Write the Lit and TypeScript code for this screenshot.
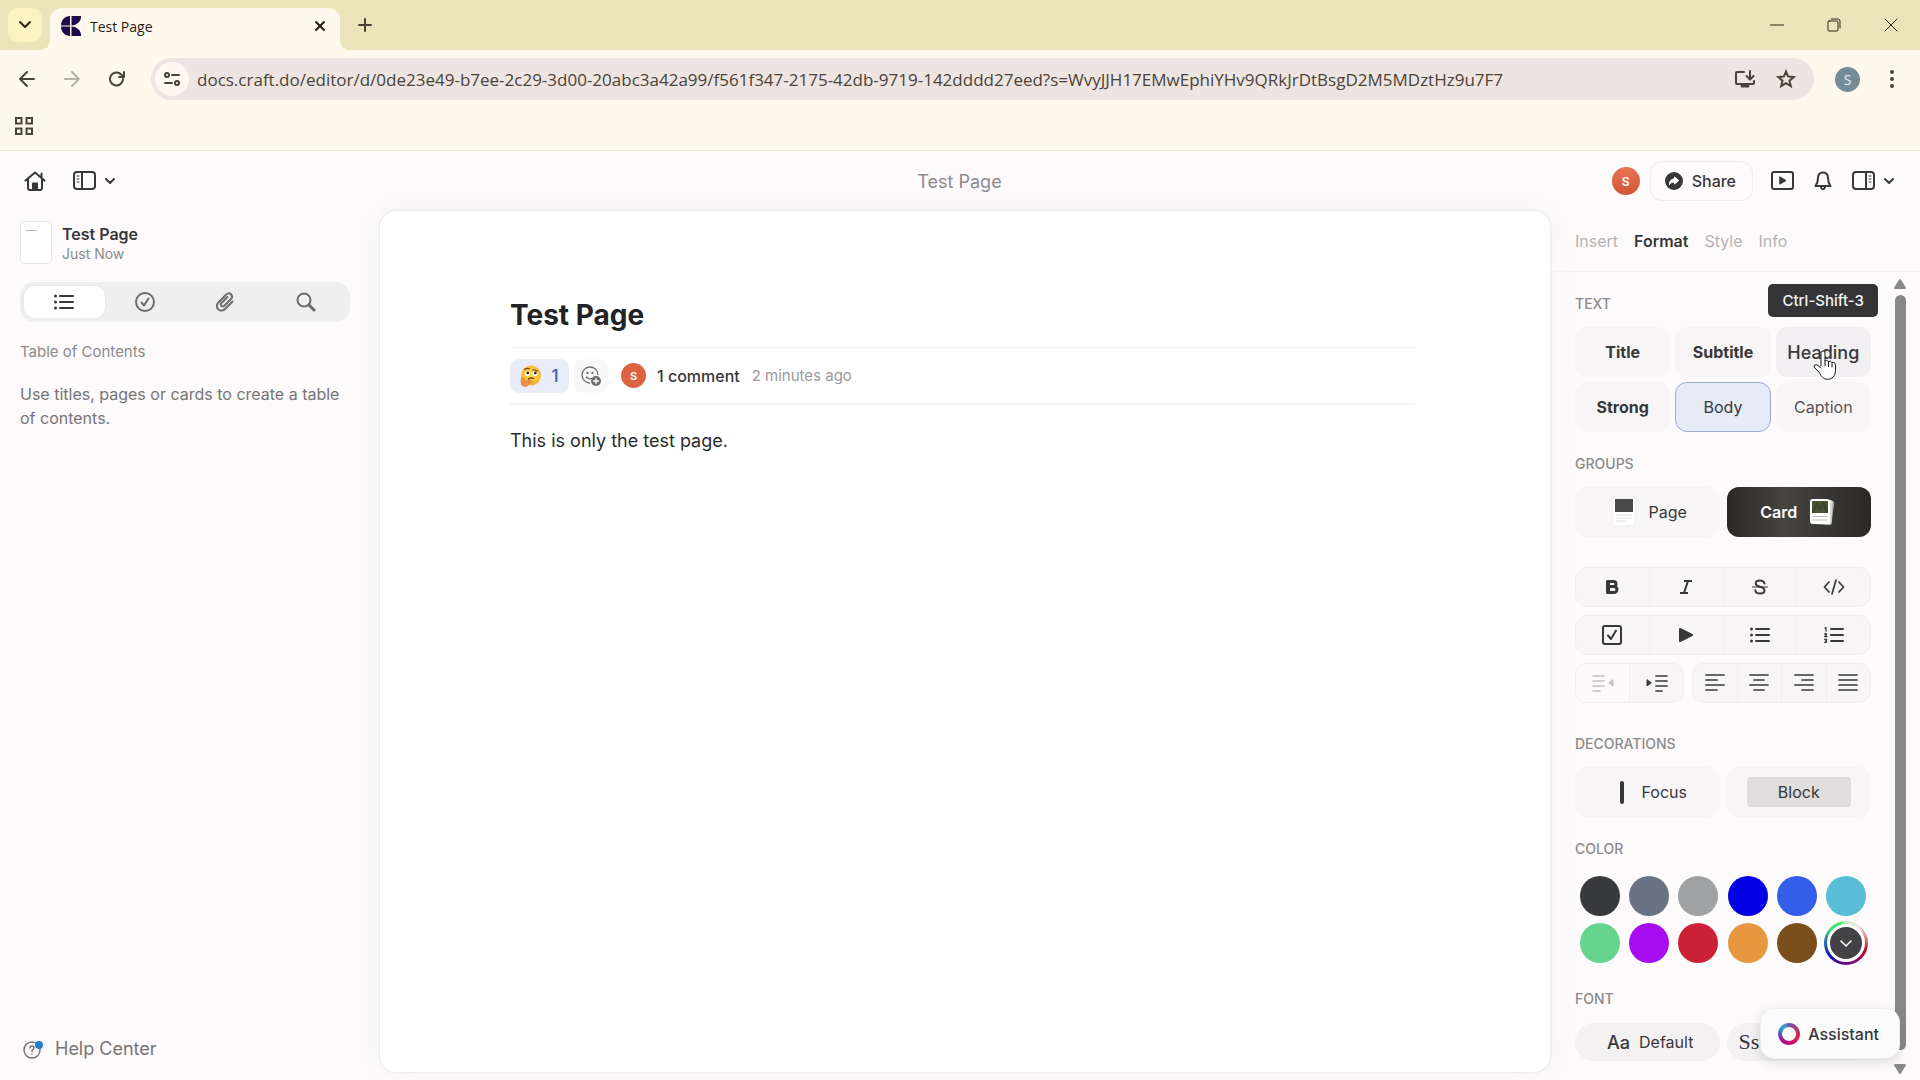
import { LitElement, html, css, svg, type TemplateResult } from "lit";
import { customElement, state } from "lit/decorators.js";
import { classMap } from "lit/directives/class-map.js";
import { styleMap } from "lit/directives/style-map.js";

const icon = (w: number, h: number, body: unknown, stroke = 2): TemplateResult => html`<svg
  width=${w} height=${h} viewBox="0 0 ${w} ${h}" fill="none" stroke="currentColor"
  stroke-width=${stroke} stroke-linecap="round" stroke-linejoin="round" aria-hidden="true">${body}</svg>`;

const chevron = icon(12, 12, svg`<path d="M2 4l4 4 4-4"/>`);
const chevronTab = icon(12, 12, svg`<path d="M1 3l5 5 5-5"/>`, 2);
const favicon = icon(22, 22, svg`<g fill="#1c0c4b" stroke="none">
  <path d="M10 1v9.500H1C1 5 5 1 10 1z"/><path d="M10 21v-9.500H1C1 17 5 21 10 21z"/>
  <path d="M11.500 1H21v1c0 4-4 8.500-9.500 8.500z"/><path d="M11.500 21H21v-1c0-4-4-8.500-9.500-8.500z"/></g>`);
const closeSmall = icon(12, 12, svg`<path d="M2 2l8 8M10 2l-8 8"/>`);
const plus = icon(14, 14, svg`<path d="M7 1v12M1 7h12"/>`);
const minimise = icon(14, 14, svg`<path d="M0 7h14"/>`, 1);
const restore = icon(14, 14, svg`<rect x="1" y="3" width="10" height="10" rx="1"/><path d="M4 1h7q2 0 2 2v7"/>`, 1);
const closeWin = icon(14, 14, svg`<path d="M1 1l12 12M13 1L1 13"/>`, 1);
const back = icon(18, 18, svg`<path d="M16 9H2M9 2L2 9l7 7"/>`);
const forward = icon(18, 18, svg`<path d="M2 9h14M9 2l7 7-7 7"/>`);
const reload = icon(18, 18, svg`<path d="M15 9a6.500 6.500 0 1 1-2-4.700L15.500 7M16 2v5h-5"/>`);
const tune = icon(18, 18, svg`<circle cx="4" cy="5" r="2"/><path d="M9 5h7M2 13h7"/><circle cx="14" cy="13" r="2"/>`);
const install = icon(22, 20, svg`<path d="M10 3H3q-1 0-1 1v10q0 1 1 1h16q1 0 1-1v-2M16 2v8M12.500 7l3.500 3.500L19.500 7"/><path d="M8 17h6" stroke-width="3"/>`);
const star = icon(20, 20, svg`<path stroke-linejoin="miter" d="M10 2.500l2.200 5.100 5.500.500-4.200 3.600 1.300 5.400L10 14.200l-4.800 2.900 1.300-5.400-4.200-3.600 5.500-.500z"/>`);
const dots = icon(4, 18, svg`<g fill="currentColor" stroke="none"><circle cx="2" cy="2" r="2"/><circle cx="2" cy="9" r="2"/><circle cx="2" cy="16" r="2"/></g>`);
const apps = icon(18, 18, svg`<g stroke-linejoin="miter"><rect x="1" y="1" width="5.500" height="5.500"/><rect x="11.500" y="1" width="5.500" height="5.500"/><rect x="1" y="11.500" width="5.500" height="5.500"/><rect x="11.500" y="11.500" width="5.500" height="5.500"/></g>`);
const home = icon(22, 20, svg`<path d="M1.500 9.500L11 1.500l9.500 8M4 8v9q0 2 2 2h10q2 0 2-2V8M17.500 2.500V6"/><path d="M9 18.500v-6h4v6z" fill="currentColor"/>`);
const panelLeft = icon(24, 20, svg`<rect x="1" y="1" width="21" height="17" rx="3"/><path d="M9 1v17"/><path d="M4 5h2M4 8h2M4 11h2" stroke-width="1"/>`);
const panelRight = icon(24, 20, svg`<rect x="1" y="1" width="21" height="17" rx="3"/><path d="M14 1v17"/><path d="M17 5h2M17 8h2M17 11h2" stroke-width="1"/>`);
const present = icon(24, 20, svg`<rect x="1" y="1" width="21" height="17" rx="2"/><path d="M9 6l6 3.500L9 13z" fill="currentColor" stroke-width="1"/>`);
const bell = icon(18, 20, svg`<path d="M9 1.500c-3.600 0-5 2.500-5 5.500 0 4-1 6-2.500 8h15C15 13 14 11 14 7c0-3-1.400-5.500-5-5.500z"/><path d="M7 16.500q2 3.500 4 0"/>`);
const shareIcon = icon(18, 18, svg`<circle cx="9" cy="9" r="9" fill="currentColor" stroke="none"/><path d="M4.500 12.500c0-4 2-5.500 5-5.500V5l4.300 3.500L9.500 12v-2c-2.500 0-4 .700-5 2.500z" fill="#fff" stroke="#fff" stroke-width="1"/>`);
const listIcon = icon(20, 16, svg`<path d="M6 2h13M6 8h13M6 14h13"/><g fill="currentColor" stroke="none"><circle cx="1.500" cy="2" r="1.500"/><circle cx="1.500" cy="8" r="1.500"/><circle cx="1.500" cy="14" r="1.500"/></g>`);
const numberedIcon = icon(20, 16, svg`<path d="M7 2h12M7 8h12M7 14h12"/><path stroke-width="1.300" d="M1 1l1-.500V4M.700 7q1.800-1.200 1.800.500L.700 9.700h2.200M.700 12.300h2L1.700 13.700q1.500.300.600 1.500-.800.500-1.600 0"/>`);
const checkCircle = icon(20, 20, svg`<circle cx="10" cy="10" r="9"/><path d="M6.500 10.500l2.500 3 4.500-7"/>`);
const clip = icon(20, 20, svg`<path d="M17.500 9.500l-7.500 7.500a4.500 4.500 0 0 1-7-6L11 2.800a3.200 3.200 0 0 1 5.500 3.700L9 14a2 2 0 0 1-3-2.500l6.500-6.500"/>`);
const search = icon(20, 20, svg`<circle cx="8" cy="8" r="6.500"/><path d="M13 13l5 5" stroke-width="3"/>`);
const help = icon(20, 20, svg`<circle cx="9" cy="11" r="8"/><path d="M7 9q0-2 2-2t2 2q0 1-2 2.500v1M9 15v.200"/><circle cx="16" cy="6" r="4" fill="#2180cf" stroke="none"/>`, 1.5);
const thinking = icon(22, 22, svg`<defs><radialGradient id="face" cx=".5" cy=".4" r=".6"><stop offset="0" stop-color="#ffe04d"/><stop offset="1" stop-color="#f6ac2b"/></radialGradient></defs>
  <circle cx="11" cy="10.500" r="10" fill="url(#face)" stroke="none"/>
  <circle cx="7.500" cy="8.500" r="2.600" fill="#fff" stroke="none"/><circle cx="15" cy="8.500" r="2.600" fill="#fff" stroke="none"/>
  <circle cx="7.800" cy="8" r="1.400" fill="#3b2410" stroke="none"/><circle cx="15.300" cy="8" r="1.400" fill="#3b2410" stroke="none"/>
  <path d="M4.500 4.500q2.500-2 5-.700M12.500 5q3-.600 5 1.200" stroke="#7b4314" stroke-width="1.200"/>
  <path d="M8.500 14q2.500-2 5-.500" stroke="#6b3510" stroke-width="1.400"/>
  <path d="M1.500 13q1.500-1 2.500 1l1.500 2.500q4-1.500 6.500-.500 1 .800-.500 1.500l-3 .800q.500 3-3.500 3.200Q1 21 1 17z" fill="#ef8d4b" stroke="#d96c38" stroke-width=".500"/>`);
const addReaction = icon(20, 20, svg`<path d="M17 8.500A8 8 0 1 0 8.500 17"/><path d="M5.500 11q2 2.500 5 1.500"/><circle cx="6.500" cy="7" r=".500"/><circle cx="11.500" cy="7" r=".500"/><circle cx="15" cy="15" r="5" fill="currentColor" stroke="none"/><path d="M15 12.500v5M12.500 15h5" stroke="#fff"/>`, 1.3);
const boldIcon = icon(16, 16, svg`<path d="M4 2.500h5.500a2.500 2.500 0 0 1 0 5H4zM4 7.500h6a3 3 0 0 1 0 6H4z" stroke-width="3" stroke-linejoin="miter"/><path d="M4 2v12" stroke-width="4" stroke-linecap="butt"/>`);
const italicIcon = icon(16, 16, svg`<path d="M6 2h8M2 14h8M10 2L6 14" stroke-linecap="butt"/>`);
const strikeIcon = icon(16, 16, svg`<path d="M12.500 4.500C12 2.500 10.500 1.500 8 1.500c-2.700 0-4.300 1.400-4.300 3.200C3.700 8.500 12.500 7 12.500 11.200c0 2-1.900 3.300-4.500 3.300-2.700 0-4.400-1.200-4.700-3.200"/><path d="M0 8h16" stroke-width="1"/>`);
const codeIcon = icon(22, 16, svg`<path d="M6 3L1.500 8 6 13M16 3l4.500 5-4.500 5M13 1L9 15"/>`, 1.7);
const todoIcon = icon(20, 20, svg`<rect x="1" y="1" width="18" height="18" rx="2"/><path d="M6 10.500l3 3.500 5-8.500"/>`);
const toggleIcon = icon(16, 16, svg`<path d="M2 2l12 6-12 6z" fill="currentColor"/>`);
const outdent = icon(22, 18, svg`<path d="M1 2h11M1 7h11M1 12h11M1 17h7"/><path d="M21 6v6l-4-3z" fill="currentColor" stroke-width="1"/>`, 1.5);
const indent = icon(22, 18, svg`<path d="M10 2h11M10 7h11M10 12h11M10 17h6"/><path d="M1 6v6l4-3z" fill="currentColor" stroke-width="1"/>`, 1.7);
const alignIcon = (lines: string) => icon(20, 18, svg`<path d=${lines}/>`, 1.7);
const cursor = icon(26, 32, svg`<path d="M9 17V4a2 2 0 0 1 4 0v8q1-1.500 3.500.500 2-1 3.200.800 3.300-.500 3.800 2v6c0 5-3 9-8 9-4 0-6-2.500-8-6.500L2 18q0-3 3-2.200L9 19" fill="#fff" stroke="#1a1a1a"/><path d="M13 12v5M16.500 13v4.500M20 14v4" stroke="#1a1a1a"/>`, 1);
const pageIcon = icon(24, 30, svg`<rect x="1" y="1" width="22" height="28" rx="2" fill="#fff" stroke="#f0eff0" stroke-width="1"/><path d="M3 2h18v13H3z" fill="#4a4a4a" stroke="none"/><path d="M4 18h16M4 21h16M4 24h9" stroke="#ddd" stroke-width="1"/>`);
const cardIcon = icon(28, 28, svg`<rect x="6" y="2" width="18" height="24" rx="2" fill="#a7a79e" stroke="none" transform="rotate(7 15 14)"/><rect x="4" y="1.500" width="19" height="25" rx="2" fill="#d9d9d4" stroke="none" transform="rotate(3 14 14)"/><rect x="1" y="1" width="20" height="25" rx="3" fill="#fff" stroke="none"/><path d="M3 3h16v12H3z" fill="#4b5432" stroke="none"/><path d="M4 14l4-8 3 5 3-6 4 8" stroke="#3c4529" stroke-width="2"/><path d="M4 18.500h14M4 22h14" stroke="#bbb" stroke-width="1"/>`);
const arrow = (d: string) => icon(14, 12, svg`<path d=${d} fill="currentColor"/>`);

interface Tool { name: string; glyph: TemplateResult; off?: boolean }

const MARKS: Tool[] = [
  { name: "Bold", glyph: boldIcon }, { name: "Italic", glyph: italicIcon },
  { name: "Strikethrough", glyph: strikeIcon }, { name: "Code", glyph: codeIcon },
];
const LISTS: Tool[] = [
  { name: "To-do", glyph: todoIcon }, { name: "Toggle", glyph: toggleIcon },
  { name: "Bulleted list", glyph: listIcon }, { name: "Numbered list", glyph: numberedIcon },
];
const INDENTS: Tool[] = [
  { name: "Outdent", glyph: outdent, off: true }, { name: "Indent", glyph: indent },
];
const ALIGNS: Tool[] = [
  { name: "Align left", glyph: alignIcon("M1 1h18M1 6h11M1 11h18M1 16h11") },
  { name: "Align centre", glyph: alignIcon("M1 1h18M5 6h10M1 11h18M5 16h10") },
  { name: "Align right", glyph: alignIcon("M1 1h18M8 6h11M1 11h18M8 16h11") },
  { name: "Justify", glyph: alignIcon("M1 1h18M1 6h18M1 11h18M1 16h18") },
];
const COLORS = ["#38393a", "#697382", "#a0a1a3", "#0600e6", "#335eea", "#5abdd8",
  "#66d48f", "#a80cf0", "#cb2038", "#e8963f", "#79501b"];

const base = css`
  * { box-sizing: border-box; }
  button, input { font: inherit; color: inherit; border: 0; background: none; padding: 0; margin: 0; }
  button { display: flex; align-items: center; justify-content: center; }
  svg { display: block; flex: none; }
  h1, h2, p { margin: 0; }
`;

@customElement("browser-chrome")
export class BrowserChrome extends LitElement {
  static styles = [base, css`
    :host { display: block; background: #fff8ec; border-bottom: 1px solid #ebe5d3; color: #4a4338;
      font-family: "Open Sans", "Noto Sans", sans-serif; }
    .strip { display: flex; align-items: flex-end; height: 50px; padding: 0 22px 0 8px; background: #ebe4ba; }
    .menu { width: 34px; height: 34px; border-radius: 10px; background: #fcf3c2; align-self: center; color: #2b2718; }
    .tab { position: relative; display: flex; align-items: center; width: 290px; height: 42px; margin-left: 8px; padding: 0 14px 6px 10px;
      border-radius: 12px 12px 0 0; background: #fff8ec; color: #1f1d18; font-size: 14px; }
    .tab::before, .tab::after { content: ""; position: absolute; bottom: 0; width: 10px; height: 10px; }
    .tab::before { left: -10px; background: radial-gradient(circle at 0 0, #ebe4ba 10px, #fff8ec 10px); }
    .tab::after { right: -10px; background: radial-gradient(circle at 100% 0, #ebe4ba 10px, #fff8ec 10px); }
    .tab span { flex: 1; margin-left: 8px; }
    .new { width: 34px; height: 34px; margin-left: 8px; align-self: center; }
    .win { display: flex; gap: 43px; margin-left: auto; align-self: center; color: #2b2718; }
    .bar { display: flex; align-items: center; height: 58px; padding: 0 26px 0 18px; gap: 27px; }
    .off { color: #b8b2a6; }
    .omni { display: flex; flex: 1; align-items: center; height: 42px; margin: 0 -6px 0 -2px; padding: 0 18px 0 4px;
      border-radius: 21px; background: #eee5e2; gap: 20px; }
    .site { width: 34px; height: 34px; border-radius: 17px; background: #fff8f0; }
    .omni input { flex: 1; min-width: 0; height: 34px; margin-left: -12px; font-size: 17px; outline: 0; }
    .user { width: 25px; height: 25px; margin-right: 3px; border-radius: 13px; background: #748c98; color: #e6f0f5; font-size: 14px; }
    .marks { display: flex; align-items: center; height: 42px; padding: 0 15px 6px; }
  `];

  render() {
    return html`
      <div class="strip">
        <button class="menu" aria-label="Search tabs">${chevronTab}</button>
        <div class="tab">${favicon}<span>Test Page</span><button aria-label="Close tab">${closeSmall}</button></div>
        <button class="new" aria-label="New tab">${plus}</button>
        <div class="win">
          <button aria-label="Minimise">${minimise}</button>
          <button aria-label="Restore">${restore}</button>
          <button aria-label="Close">${closeWin}</button>
        </div>
      </div>
      <div class="bar">
        <button aria-label="Back">${back}</button>
        <button class="off" aria-label="Forward" disabled>${forward}</button>
        <button aria-label="Reload">${reload}</button>
        <div class="omni">
          <button class="site" aria-label="Site information">${tune}</button>
          <input aria-label="Address" value="docs.craft.do/editor/d/0de23e49-b7ee-2c29-3d00-20abc3a42a99/f561f347-2175-42db-9719-142dddd27eed?s=WvyJJH17EMwEphiYHv9QRkJrDtBsgD2M5MDztHz9u7F7">
          <button aria-label="Install app">${install}</button>
          <button aria-label="Bookmark">${star}</button>
        </div>
        <button class="user" aria-label="Profile">S</button>
        <button aria-label="Browser menu">${dots}</button>
      </div>
      <div class="marks"><button aria-label="Apps">${apps}</button></div>`;
  }
}

@customElement("doc-sidebar")
export class DocSidebar extends LitElement {
  static styles = [base, css`
    :host { display: flex; flex-direction: column; padding: 10px 30px 18px 20px; }
    .doc { display: flex; align-items: center; gap: 10px; }
    .thumb { width: 32px; height: 43px; padding: 8px 0 0 5px; border: 1px solid #e6e4e5; border-radius: 5px; background: #fff; }
    .thumb i { display: block; width: 11px; height: 1px; background: #bbb; }
    .name { font-size: 16px; line-height: 22px; font-weight: 600; color: #38373a; }
    .when { font-size: 14px; line-height: 18px; color: #8c8a8c; }
    .seg { display: grid; grid-template-columns: repeat(4, 1fr); height: 40px; margin-top: 18px; padding: 4px;
      border-radius: 14px; background: #f0eff0; color: #6b6a6c; }
    .seg button { border-radius: 11px; }
    .seg .on { background: #fff; color: #38373a; box-shadow: 0 0 3px #0001; }
    h2 { margin-top: 20px; font-size: 15px; line-height: 20px; font-weight: 400; color: #8c8a8c; }
    p { margin-top: 20px; font-size: 16px; line-height: 24px; color: #767476; }
    a { display: flex; align-items: center; gap: 12px; margin-top: auto; padding-left: 3px; font-size: 18px;
      line-height: 26px; color: #767476; text-decoration: none; }
  `];

  @state() private view = 0;

  render() {
    const views = [["Contents", listIcon], ["Tasks", checkCircle], ["Attachments", clip], ["Search", search]] as const;
    return html`
      <div class="doc">
        <div class="thumb"><i></i></div>
        <div><div class="name">Test Page</div><div class="when">Just Now</div></div>
      </div>
      <div class="seg">
        ${views.map(([name, glyph], i) => html`<button aria-label=${name} class=${classMap({ on: this.view === i })}
          @click=${() => (this.view = i)}>${glyph}</button>`)}
      </div>
      <h2>Table of Contents</h2>
      <p>Use titles, pages or cards to create a table of contents.</p>
      <a href="#help">${help}Help Center</a>`;
  }
}

@customElement("doc-page")
export class DocPage extends LitElement {
  static styles = [base, css`
    :host { display: block; padding: 80px 135px 0 130px; margin-bottom: 8px; border-radius: 16px; background: #fff;
      box-shadow: 0 0 3px #0002, 0 0 36px #00000008; color: #232225; }
    h1 { font-size: 28px; line-height: 48px; font-weight: 700; }
    .meta { display: flex; align-items: center; height: 58px; margin-top: 8px; border-top: 1px solid #f4f3f4;
      border-bottom: 2px solid #f4f3f4; }
    .chip { gap: 9px; width: 59px; height: 34px; border-radius: 9px; background: #e9edf9; color: #3a5fb0; font-size: 17px; font-weight: 500; }
    .add { width: 34px; height: 34px; margin-left: 5px; border-radius: 9px; background: #f9f8f9; color: #6b6a6c; }
    .face { display: grid; place-items: center; width: 25px; height: 25px; margin: 0 11px 0 13px; border-radius: 13px;
      background: #dc6342; color: #fff; font-size: 11px; font-weight: 600; }
    .count { font-size: 16px; font-weight: 500; color: #38373a; }
    .ago { margin-left: 12px; font-size: 15px; color: #9a999b; }
    .text { margin-top: 21px; font-size: 18px; line-height: 30px; color: #2c2b2e; }
  `];

  render() {
    return html`
      <h1>Test Page</h1>
      <div class="meta">
        <button class="chip" aria-label="Thinking face, 1 reaction">${thinking}<span>1</span></button>
        <button class="add" aria-label="Add reaction">${addReaction}</button>
        <span class="face">S</span>
        <button class="count">1 comment</button>
        <span class="ago">2 minutes ago</span>
      </div>
      <p class="text">This is only the test page.</p>`;
  }
}

@customElement("format-panel")
export class FormatPanel extends LitElement {
  static styles = [base, css`
    :host { display: flex; flex-direction: column; min-width: 0; color: #38373a; font-size: 16px; }
    .tabs { display: flex; gap: 16px; height: 61px; padding-left: 25px; border-bottom: 1px solid #f4f2f3; }
    .tabs button { color: #b5b3b5; font-size: 16px; }
    .tabs .on { color: #38373a; font-weight: 600; }
    .scroll { display: flex; flex: 1; min-height: 0; }
    .body { flex: 1; padding: 22px 19px 0 25px; }
    h2 { font-size: 14px; line-height: 20px; font-weight: 500; color: #8c8a8c; }
    .styles { display: grid; grid-template-columns: repeat(3, 1fr); gap: 5px; margin-top: 13px; }
    .pair { display: grid; grid-template-columns: repeat(2, 1fr); gap: 7px; margin-top: 13px; }
    .styles button, .pair button { height: 50px; border-radius: 12px; background: #f7f5f6; }
    .strong { font-weight: 700; }
    .styles .heading { position: relative; background: #f1eff1; font-size: 18px; font-weight: 500; }
    .tip { position: absolute; bottom: 60px; right: -7px; height: 33px; padding: 0 14px; border-radius: 5px; background: #353437;
      color: #f5f5f5; font-size: 15px; line-height: 33px; font-weight: 500; white-space: nowrap; }
    .hand { position: absolute; left: 36px; top: 22px; }
    .styles .body-style { border: 1px solid #9aa9cc; background: #e5ebf7; }
    .caption { color: #555356; }
    .gap { margin-top: 22px; }
    .pair .page { gap: 13px; padding-left: 4px; }
    .pair .card { gap: 12px; background: linear-gradient(90deg, #2b2926, #46443f 40%, #2b2926); color: #fff; font-weight: 600; }
    .rows { display: flex; flex-direction: column; gap: 8px; margin-top: 30px; }
    .split { display: grid; grid-template-columns: 109fr 179fr; gap: 8px; }
    .row { display: flex; height: 40px; border: 1px solid #f0eeef; border-radius: 12px; background: #f7f5f6; overflow: hidden; }
    .row button { flex: 1; border-left: 1px solid #f0eeef; }
    .row button:first-child { border-left: 0; }
    .row .off { color: #c2c0c2; background: #fbf9fa; }
    .deco { margin-top: 31px; }
    .pair .focus { gap: 18px; padding-left: 12px; }
    .focus i { width: 4px; height: 23px; border-radius: 2px; background: #38373a; }
    .block span { padding: 0 31px; border-radius: 4px; background: #dfddde; line-height: 30px; }
    .pair.fonts { margin-top: 14px; }
    .pair.fonts button { height: 38px; padding-left: 6px; border-radius: 19px; background: #f3f1f2; gap: 9px; }
    .aa { font-size: 18px; font-weight: 500; }
    .pair.fonts .serif { justify-content: flex-start; padding-left: 12px; font-family: "Liberation Serif", serif; font-size: 22px; }
    .colors { display: grid; grid-template-columns: repeat(6, 40px); justify-content: space-between; gap: 7px 0; padding: 0 5px; margin-top: 17px; }
    .colors button { height: 40px; border-radius: 20px; }
    .colors .more { width: 44px; height: 44px; margin: -2px; border-radius: 22px;
      background: conic-gradient(#c9f5c4, #f1e6e2 40deg, #d9707c 80deg, #b50d2b 110deg, #8a0a60 150deg, #5c0a90 190deg, #0a0aa8 230deg, #2a7fb0 280deg, #3fe27a 310deg, #3fe85a 345deg, #c9f5c4); }
    .more span { display: grid; place-items: center; width: 38px; height: 38px; border: 3px solid #fff; border-radius: 19px; background: #434244; color: #fff; }
    .font-title { margin-top: 26px; }
    .track { display: flex; flex-direction: column; align-items: center; width: 20px; margin-right: 10px; padding: 6px 0 5px; gap: 5px; color: #8a898a; }
    .thumb { flex: 1; width: 11px; margin-bottom: 8px; border-radius: 6px; background: #8a898a; }
  `];

  @state() private tab = "Format";

  private row(tools: Tool[]) {
    return html`<div class="row">${tools.map((t) => html`<button aria-label=${t.name} ?disabled=${!!t.off}
      class=${classMap({ off: !!t.off })}>${t.glyph}</button>`)}</div>`;
  }

  render() {
    return html`
      <div class="tabs">${["Insert", "Format", "Style", "Info"].map((t) => html`<button
        class=${classMap({ on: t === this.tab })} @click=${() => (this.tab = t)}>${t}</button>`)}</div>
      <div class="scroll">
        <div class="body">
          <h2>TEXT</h2>
          <div class="styles">
            <button class="strong">Title</button>
            <button class="strong">Subtitle</button>
            <button class="heading">Heading<span class="tip" role="tooltip">Ctrl-Shift-3</span><span class="hand">${cursor}</span></button>
            <button class="strong">Strong</button>
            <button class="body-style">Body</button>
            <button class="caption">Caption</button>
          </div>
          <h2 class="gap">GROUPS</h2>
          <div class="pair">
            <button class="page">${pageIcon}Page</button>
            <button class="card">Card${cardIcon}</button>
          </div>
          <div class="rows">
            ${this.row(MARKS)}${this.row(LISTS)}
            <div class="split">${this.row(INDENTS)}${this.row(ALIGNS)}</div>
          </div>
          <h2 class="deco">DECORATIONS</h2>
          <div class="pair">
            <button class="focus"><i></i>Focus</button>
            <button class="block"><span>Block</span></button>
          </div>
          <h2 class="gap">COLOR</h2>
          <div class="colors">
            ${COLORS.map((c) => html`<button aria-label="Color ${c}" style=${styleMap({ background: c })}></button>`)}
            <button class="more" aria-label="More colors"><span>${icon(12, 12, svg`<path d="M1 4l5 5 5-5"/>`, 1.5)}</span></button>
          </div>
          <h2 class="font-title">FONT</h2>
          <div class="pair fonts">
            <button><span class="aa">Aa</span>Default</button>
            <button class="serif">Ss</button>
          </div>
        </div>
        <div class="track" aria-hidden="true">${arrow("M7 2l5 8H2z")}<div class="thumb"></div>${arrow("M7 10l5-8H2z")}</div>
      </div>`;
  }
}

@customElement("app-root")
export class AppRoot extends LitElement {
  static styles = [base, css`
    :host { display: flex; flex-direction: column; position: relative; min-height: 100vh; overflow: hidden;
      background: #fcfafb; color: #38373a; font-family: Inter, "Liberation Sans", sans-serif; }
    header { display: grid; grid-template-columns: 1fr auto 1fr; align-items: center; height: 60px; padding: 0 25px 0 24px; }
    header > div { display: flex; align-items: center; }
    .left { gap: 27px; }
    .pick { gap: 7px; }
    .title { font-size: 18px; color: #8c8a8c; }
    .right { justify-content: flex-end; }
    .face { display: grid; place-items: center; width: 28px; height: 28px; border-radius: 14px;
      background: linear-gradient(#e87453, #cf5535); color: #fff; font-size: 12px; font-weight: 600; }
    .share { gap: 9px; height: 40px; margin: 0 18px 0 10px; padding: 0 16px 0 14px; border: 1px solid #eeecee;
      border-radius: 12px; font-size: 16px; font-weight: 500; }
    .bell { margin: 0 20px 0 19px; }
    main { display: grid; flex: 1; grid-template-columns: 380px 1fr 370px; }
    .assist { position: absolute; right: 20px; bottom: 21px; gap: 8px; height: 51px; padding: 0 20px 0 17px; border: 1px solid #eeecee;
      border-radius: 14px; background: #fcfbfc; box-shadow: 0 3px 12px #0002; font-size: 16px; font-weight: 500; }
    .ring { width: 22px; height: 22px; padding: 4px; border-radius: 11px;
      background: conic-gradient(#6a58a8, #e0224d 110deg, #d0106a 160deg, #a30f9b 230deg, #2f7fd0 290deg, #39a4cf 330deg, #6a58a8); }
    .ring i { display: block; width: 14px; height: 14px; border-radius: 7px; background: #fcfbfc; }
  `];

  render() {
    return html`
      <browser-chrome></browser-chrome>
      <header>
        <div class="left">
          <button aria-label="Home">${home}</button>
          <button class="pick" aria-label="Toggle sidebar">${panelLeft}${chevron}</button>
        </div>
        <span class="title">Test Page</span>
        <div class="right">
          <span class="face">S</span>
          <button class="share">${shareIcon}Share</button>
          <button aria-label="Present">${present}</button>
          <button class="bell" aria-label="Notifications">${bell}</button>
          <button class="pick" aria-label="Toggle panel">${panelRight}${chevron}</button>
        </div>
      </header>
      <main>
        <doc-sidebar></doc-sidebar>
        <doc-page></doc-page>
        <format-panel></format-panel>
      </main>
      <button class="assist"><span class="ring"><i></i></span>Assistant</button>`;
  }
}
